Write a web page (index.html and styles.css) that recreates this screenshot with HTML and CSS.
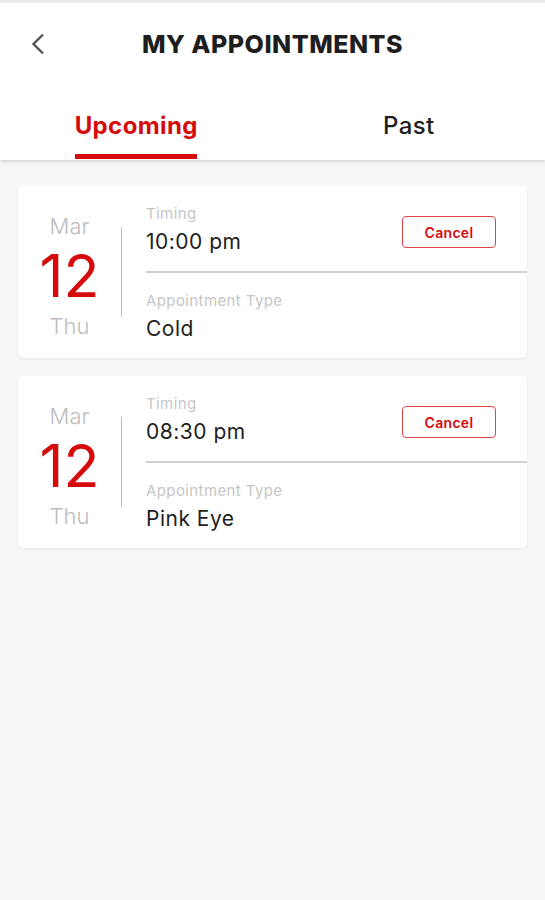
FILE: index.html
```html
<!DOCTYPE html>
<html lang="en">
<head>
    <meta charset="UTF-8">
    <title>My Appointments</title>
    <link rel="stylesheet" href="styles.css">
</head>
<body>

    <header class="app-header">
        <div class="title-bar">
            <button class="back-btn" aria-label="Back">
                <svg width="14" height="22" viewBox="0 0 14 22">
                    <path d="M12 1.5 L2.5 11 L12 20.5" fill="none" stroke="#555" stroke-width="2.4"/>
                </svg>
            </button>
            <h1>MY APPOINTMENTS</h1>
            <span></span>
        </div>
        <nav class="tabs">
            <div class="tab active"><span>Upcoming</span></div>
            <div class="tab"><span>Past</span></div>
        </nav>
    </header>

    <main class="list">
        <div class="card">
            <div class="date">
                <span class="month">Mar</span>
                <span class="day">12</span>
                <span class="weekday">Thu</span>
            </div>
            <div class="divider"></div>
            <div class="details">
                <div class="row top">
                    <div>
                        <div class="label">Timing</div>
                        <div class="value">10:00 pm</div>
                    </div>
                    <button class="cancel-btn">Cancel</button>
                </div>
                <div class="row">
                    <div>
                        <div class="label">Appointment Type</div>
                        <div class="value">Cold</div>
                    </div>
                </div>
            </div>
        </div>

        <div class="card">
            <div class="date">
                <span class="month">Mar</span>
                <span class="day">12</span>
                <span class="weekday">Thu</span>
            </div>
            <div class="divider"></div>
            <div class="details">
                <div class="row top">
                    <div>
                        <div class="label">Timing</div>
                        <div class="value">08:30 pm</div>
                    </div>
                    <button class="cancel-btn">Cancel</button>
                </div>
                <div class="row">
                    <div>
                        <div class="label">Appointment Type</div>
                        <div class="value">Pink Eye</div>
                    </div>
                </div>
            </div>
        </div>
    </main>

</body>
</html>
```

FILE: styles.css
```css
:root {
    --red: #d60a0a;
    --bg-color: #f7f7f7;
    --text-color: #1e1e1e;
    --muted: #c6c6c6;
}

body {
    margin: 0;
    background: var(--bg-color);
    color: var(--text-color);
    font-family: "Inter", "Liberation Sans", sans-serif;
    height: 100vh;
}

.app-header {
    background: #ffffff;
    border-top: 3px solid #ececec;
    box-shadow: 0 2px 3px rgba(0, 0, 0, 0.12);
}

.title-bar {
    display: grid;
    grid-template-columns: 80px 1fr 80px;
    align-items: center;
    height: 81px;
}

.back-btn {
    background: none;
    border: none;
    padding: 0 0 0 31px;
    display: flex;
    cursor: pointer;
}

.title-bar h1 {
    margin: 0;
    text-align: center;
    font-size: 25px;
    font-weight: 800;
    letter-spacing: 0.5px;
}

.tabs {
    display: grid;
    grid-template-columns: 1fr 1fr;
    height: 76px;
}

.tab {
    display: flex;
    flex-direction: column;
    align-items: center;
    justify-content: flex-end;
    font-size: 24px;
    font-weight: 500;
    letter-spacing: 0.4px;
}

.tab span {
    position: relative;
    line-height: 28px;
    padding-bottom: 20px;
}

.tab.active {
    color: var(--red);
    font-weight: 700;
}

/* fixed-width underline under the active tab */
.tab.active span::after {
    content: "";
    position: absolute;
    left: 50%;
    bottom: 1px;
    width: 122px;
    height: 5px;
    margin-left: -61px;
    background: var(--red);
}

.list {
    display: flex;
    flex-direction: column;
    gap: 18px;
    padding: 26px 18px;
}

.card {
    display: flex;
    align-items: center;
    background: #ffffff;
    border-radius: 5px;
    box-shadow: 0 1px 3px rgba(0, 0, 0, 0.08);
    height: 172px;
}

.date {
    width: 103px;
    padding-top: 8px;
    display: flex;
    flex-direction: column;
    align-items: center;
    color: #bdbdbd;
    font-size: 22px;
    font-weight: 300;
    line-height: 26px;
}

.date .day {
    color: var(--red);
    font-size: 59px;
    font-weight: 400;
    line-height: 74px;
}

.divider {
    width: 1px;
    height: 90px;
    background: #bdbdbd;
}

.details {
    flex: 1;
    align-self: stretch;
    margin-left: 24px;
    display: flex;
    flex-direction: column;
}

.row {
    flex: 1;
    display: flex;
    justify-content: space-between;
    align-items: flex-start;
    padding-top: 19px;
}

.row.top {
    border-bottom: 2px solid #d2d2d2;
}

.label {
    color: var(--muted);
    font-size: 15px;
    line-height: 18px;
    letter-spacing: 0.4px;
}

.value {
    margin-top: 4px;
    font-size: 21px;
    line-height: 30px;
    letter-spacing: 0.5px;
}

.cancel-btn {
    margin: 11px 31px 0 0;
    width: 94px;
    height: 32px;
    background: #ffffff;
    border: 1.5px solid #e04646;
    border-radius: 4px;
    color: var(--red);
    font-family: inherit;
    font-size: 14px;
    font-weight: 600;
    letter-spacing: 0.3px;
    cursor: pointer;
}
```
